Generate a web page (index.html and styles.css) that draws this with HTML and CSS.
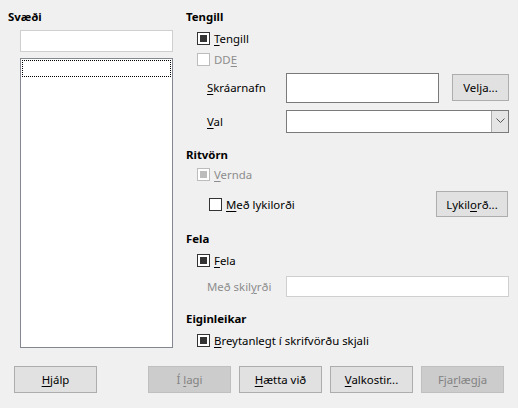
FILE: index.html
```html
<!DOCTYPE html>
<html>
<head>
<meta charset="utf-8">
<link rel="stylesheet" href="styles.css">
</head>
<body>
<div class="dialog">
  <div class="main">
    <div class="left">
      <div class="heading">Svæði</div>
      <div class="entry light left-entry"></div>
      <div class="listbox"><div class="focusrow"></div></div>
    </div>
    <div class="right">
      <div class="heading">Tengill</div>
      <div class="row cbrow first"><span class="cb checked"></span><span><span class="mn">T</span>engill</span></div>
      <div class="row cbrow"><span class="cb disabled"></span><span class="dis">DD<span class="mn">E</span></span></div>
      <div class="row file-row">
        <span class="label"><span class="mn">S</span>kráarnafn</span>
        <div class="entry dark file-entry"></div>
        <button class="btn velja">Velja...</button>
      </div>
      <div class="row val-row">
        <span class="label"><span class="mn">V</span>al</span>
        <div class="combo"><div class="combo-btn"><svg width="9" height="6" viewBox="0 0 9 6"><path d="M0.5 0.5 L4.5 4.5 L8.5 0.5" fill="none" stroke="#555" stroke-width="1"/></svg></div></div>
      </div>
      <div class="heading sec">Ritvörn</div>
      <div class="row cbrow vernda"><span class="cb checked disabled"></span><span class="dis"><span class="mn">V</span>ernda</span></div>
      <div class="row pw-row">
        <span class="cb"></span><span class="pwlabel"><span class="mn">M</span>eð lykilorði</span>
        <button class="btn pw">Lykil<span class="mn">o</span>rð...</button>
      </div>
      <div class="heading sec">Fela</div>
      <div class="row cbrow first"><span class="cb checked"></span><span><span class="mn">F</span>ela</span></div>
      <div class="row cond-row">
        <span class="label dis">Með skil<span class="mn">y</span>rði</span>
        <div class="entry light cond-entry"></div>
      </div>
      <div class="heading sec">Eiginleikar</div>
      <div class="row cbrow first"><span class="cb checked"></span><span><span class="mn">B</span>reytanlegt í skrifvörðu skjali</span></div>
    </div>
  </div>
  <div class="buttons">
    <button class="btn"><span class="mn">H</span>jálp</button>
    <div class="spacer"></div>
    <button class="btn disabled">Í <span class="mn">l</span>agi</button>
    <button class="btn"><span class="mn">H</span>ætta við</button>
    <button class="btn"><span class="mn">V</span>alkostir...</button>
    <button class="btn disabled">Fja<span class="mn">r</span>lægja</button>
  </div>
</div>
</body>
</html>
```
FILE: styles.css
```css
* { box-sizing: border-box; }
html, body { margin: 0; padding: 0; }
body {
  background: #f0f0f0;
  font-family: "Noto Sans", "DejaVu Sans", sans-serif;
  font-size: 11.4px;
  color: #000;
  width: 518px;
  height: 408px;
  overflow: hidden;
}
.dialog { padding: 9px 0 0 8px; }
.main { display: flex; height: 342px; }
.left { width: 178px; display: flex; flex-direction: column; }
.right { width: 323px; display: flex; flex-direction: column; }
.heading { font-weight: bold; height: 16px; line-height: 16px; }
.heading.sec { margin-top: 14px; }
.entry { background: #fff; border: 1px solid #7a7a7a; }
.entry.light { border-color: #cfcfcf; }
.left-entry { margin: 5px 0 0 12px; width: 153px; height: 22px; }
.listbox {
  margin: 6px 0 0 12px; width: 153px; height: 290px;
  background: #fff; border: 1px solid #828790; padding: 1px;
}
.focusrow { height: 17px; border: 1px dotted #000; }
.row { display: flex; align-items: center; }
.cbrow { height: 21px; padding-left: 11px; }
.cbrow.first { margin-top: 3px; }
.vernda { margin-top: 2px; }
.cb {
  width: 13px; height: 13px; border: 1px solid #333; background: #fff;
  margin-right: 4px; flex: none; position: relative;
}
.cb.checked::after {
  content: ""; position: absolute; left: 2px; top: 2px; width: 7px; height: 7px; background: #333;
}
.cb.disabled { border-color: #bcbcbc; }
.cb.checked.disabled::after { background: #bcbcbc; }
.dis { color: #8d8d8d; }
.mn { text-decoration: underline; text-underline-offset: 2px; }
.label { width: 100px; padding-left: 21px; flex: none; white-space: nowrap; }
.file-row { margin-top: 3px; height: 30px; }
.file-entry { width: 153px; height: 30px; }
.btn {
  font: inherit; color: #000; background: #e1e1e1; border: 1px solid #adadad;
  height: 27px; padding: 0; border-radius: 0;
}
.btn.disabled { background: #cccccc; border-color: #bfbfbf; color: #838383; }
.velja { width: 57px; margin-left: 13px; }
.val-row { margin-top: 7px; height: 23px; }
.combo {
  width: 223px; height: 23px; background: #fff; border: 1px solid #7a7a7a;
  display: flex; justify-content: flex-end;
}
.combo-btn {
  width: 17px; height: 21px; background: #e5e5e5; border-left: 1px solid #acacac;
  display: flex; align-items: center; justify-content: center;
}
.pw-row { margin-top: 6px; height: 26px; padding-left: 23px; }
.pwlabel { flex: 1; }
.btn.pw { width: 72px; height: 26px; margin-right: 1px; }
.cond-row { margin-top: 5px; height: 21px; }
.cond-entry { width: 223px; height: 21px; }
.buttons { display: flex; margin-top: 15px; padding-left: 6px; gap: 8px; }
.buttons .btn { width: 83px; }
.spacer { width: 35px; }
```
